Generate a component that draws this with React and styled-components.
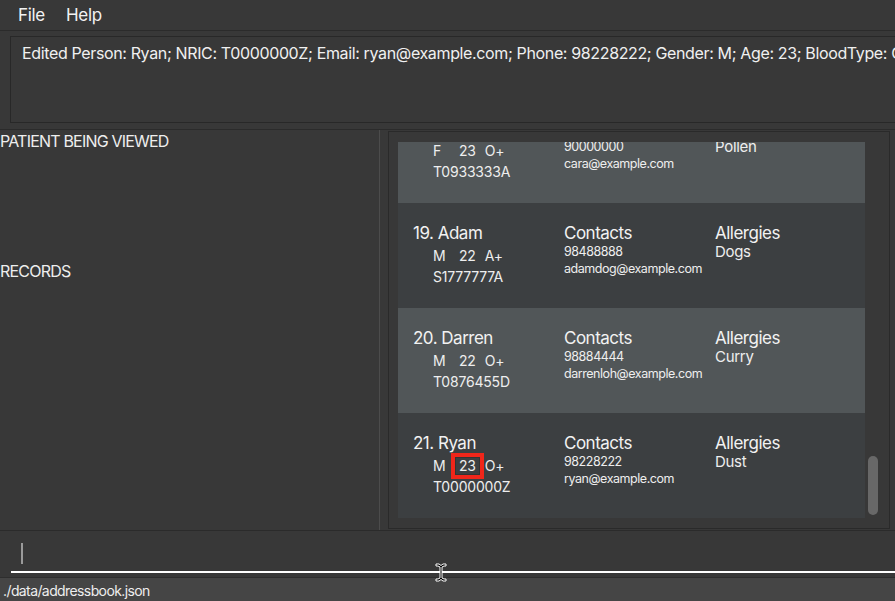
import React from "react";
import styled, { createGlobalStyle } from "styled-components";

const GlobalStyle = createGlobalStyle`
  html, body { margin: 0; padding: 0; background: #383838; }
  body { font-family: Inter, "Open Sans", "Liberation Sans", sans-serif; color: #eeeeee; }
  * { box-sizing: border-box; }
`;

const Window = styled.div`
  position: relative;
  width: 895px;
  height: 601px;
  overflow: hidden;
  display: flex;
  flex-direction: column;
  background: #383838;
`;

const MenuBar = styled.div`
  height: 31px;
  flex: none;
  display: flex;
  align-items: center;
  gap: 21px;
  padding: 0 0 1px 18px;
  border-bottom: 1px solid #2b2b2b;
`;

const MenuItem = styled.span`
  font-size: 17px;
  color: #f2f2f2;
  letter-spacing: -0.3px;
`;

const ResultArea = styled.div`
  flex: none;
  padding: 5px 0 6px 10px;
`;

const ResultBox = styled.div`
  height: 87px;
  margin-right: -60px;
  border: 1px solid #282828;
  padding: 5px 11px;
  font-size: 16px;
  line-height: 22px;
  letter-spacing: -0.36px;
  white-space: nowrap;
  overflow: hidden;
  color: #f0f0f0;
`;

const Main = styled.div`
  flex: none;
  height: 401px;
  display: flex;
  border-top: 1px solid #2b2b2b;
`;

const LeftPane = styled.div`
  width: 380px;
  flex: none;
  display: flex;
  flex-direction: column;
  border-right: 1px solid #4c4c4c;
`;

const Section = styled.div`
  height: ${(p) => p.$h};
  font-size: 16px;
  line-height: 20px;
  padding-top: 1px;
  color: #eeeeee;
  letter-spacing: -0.8px;
`;

const RightPane = styled.div`
  flex: 1;
  padding: 1px 5px 1px 8px;
  display: flex;
`;

const ListFrame = styled.div`
  flex: 1;
  border: 1px solid #2a2a2a;
  padding: 10px 0 10px 9px;
  display: flex;
  gap: 3px;
`;

const Viewport = styled.div`
  width: 467px;
  flex: none;
  overflow: hidden;
  display: flex;
  flex-direction: column;
  justify-content: flex-end;
`;

const Track = styled.div`
  width: 10px;
  display: flex;
  flex-direction: column;
  justify-content: flex-end;
  padding-bottom: 3px;
`;

const Thumb = styled.div`
  height: 59px;
  border-radius: 5px;
  background: #686868;
`;

const Cell = styled.div`
  flex: none;
  height: 105px;
  background: ${(p) => (p.$light ? "#515658" : "#3c3f41")};
  display: grid;
  grid-template-columns: 151px 151px 1fr;
  padding: 20px 0 0 15px;
`;

const Col = styled.div`
  display: flex;
  flex-direction: column;
`;

const Title = styled.div`
  font-size: 17px;
  line-height: 20px;
  color: #f2f2f2;
  letter-spacing: -0.5px;
  white-space: nowrap;
`;

const TagRow = styled.div`
  display: flex;
  align-items: center;
  height: 22px;
  margin-top: 2px;
  padding-left: 20px;
  font-size: 14px;
  line-height: 18px;
  letter-spacing: -0.2px;
`;

const Tag = styled.span`
  flex: none;
  width: ${(p) => p.$w || "auto"};
  padding: ${(p) => p.$pad || "0"};
  border: ${(p) => p.$bw || "0"} solid ${(p) => (p.$hl ? "#f0261a" : "transparent")};
  box-shadow: ${(p) => (p.$hl ? "inset 0 0 0 1px #333" : "none")};
  display: flex;
  align-items: center;
`;

const Nric = styled.div`
  padding-left: 20px;
  font-size: 14px;
  line-height: 20px;
  letter-spacing: -0.2px;
`;

const Small = styled.div`
  font-size: ${(p) => p.$fs || "12.5px"};
  line-height: 17px;
  letter-spacing: ${(p) => p.$ls || "-0.45px"};
  white-space: nowrap;
  color: #eeeeee;
`;

const CommandArea = styled.div`
  flex: none;
  height: 47px;
  border-top: 1px solid #2b2b2b;
  padding: 12px 0 0 11px;
  display: flex;
  flex-direction: column;
`;

const Caret = styled.div`
  width: 2px;
  height: 21px;
  margin-left: 10px;
  background: #9a9a9a;
`;

const Underline = styled.div`
  margin-top: 7px;
  height: 2px;
  background: #ffffff;
`;

const StatusBar = styled.div`
  flex: 1;
  background: #454545;
  border-top: 1px solid #2e2e2e;
  font-size: 14px;
  line-height: 22px;
  padding: 2px 0 0 3px;
  color: #eeeeee;
  letter-spacing: -0.6px;
`;

const Cursor = styled.svg`
  position: absolute;
  left: 435px;
  top: 563px;
`;

const people = [
  { n: "18. Cara", g: "F", a: "23", b: "O+", id: "T0933333A", p: "90000000", e: "cara@example.com", al: "Pollen", light: true },
  { n: "19. Adam", g: "M", a: "22", b: "A+", id: "S1777777A", p: "98488888", e: "adamdog@example.com", al: "Dogs" },
  { n: "20. Darren", g: "M", a: "22", b: "O+", id: "T0876455D", p: "98884444", e: "darrenloh@example.com", al: "Curry", light: true },
  { n: "21. Ryan", g: "M", a: "23", b: "O+", id: "T0000000Z", p: "98228222", e: "ryan@example.com", al: "Dust", hl: true },
];

export default function App() {
  return (
    <Window>
      <GlobalStyle />
      <MenuBar>
        <MenuItem>File</MenuItem>
        <MenuItem>Help</MenuItem>
      </MenuBar>
      <ResultArea>
        <ResultBox>
          Edited Person: Ryan; NRIC: T0000000Z; Email: ryan@example.com; Phone: 98228222; Gender: M; Age: 23; BloodType: O+; Allergies: [Dust]
        </ResultBox>
      </ResultArea>
      <Main>
        <LeftPane>
          <Section $h="130px">PATIENT BEING VIEWED</Section>
          <Section $h="auto">RECORDS</Section>
        </LeftPane>
        <RightPane>
          <ListFrame>
            <Viewport>
              {people.map((x) => (
                <Cell key={x.n} $light={x.light}>
                  <Col>
                    <Title>{x.n}</Title>
                    <TagRow>
                      <Tag $w="18px">{x.g}</Tag>
                      <Tag $pad="0 4px" $bw="4px" $hl={x.hl}>{x.a}</Tag>
                      <Tag $pad="0 0 0 1px">{x.b}</Tag>
                    </TagRow>
                    <Nric>{x.id}</Nric>
                  </Col>
                  <Col>
                    <Title>Contacts</Title>
                    <Small>{x.p}</Small>
                    <Small>{x.e}</Small>
                  </Col>
                  <Col>
                    <Title>Allergies</Title>
                    <Small $fs="15px" $ls="-0.3px">{x.al}</Small>
                  </Col>
                </Cell>
              ))}
            </Viewport>
            <Track>
              <Thumb />
            </Track>
          </ListFrame>
        </RightPane>
      </Main>
      <CommandArea>
        <Caret />
        <Underline />
      </CommandArea>
      <StatusBar>./data/addressbook.json</StatusBar>
      <Cursor width="12" height="19" viewBox="0 0 12 19">
        <path d="M1 1h3l2 1.5L8 1h3v2H9L7 4v11l2 1h2v2H8l-2-1.5L4 18H1v-2h2l2-1V4L3 3H1z" fill="#000" stroke="#fff" strokeWidth="1" />
      </Cursor>
    </Window>
  );
}
